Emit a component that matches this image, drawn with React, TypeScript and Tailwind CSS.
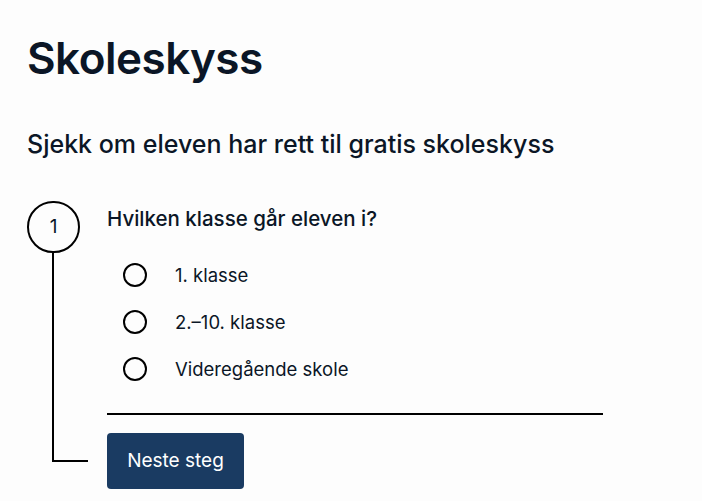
import React, { useState } from 'react';

const options = ['1. klasse', '2.–10. klasse', 'Videregående skole'];

const App: React.FC = () => {
  const [selected, setSelected] = useState<number | null>(null);

  return (
    <div className="min-h-screen bg-[#fdfdfd] pl-[27px] pt-[30px] font-['Inter',sans-serif] text-[#0b1626]">
      <h1 className="text-[44px] leading-[56px] font-semibold tracking-[-0.5px]">Skoleskyss</h1>
      <h2 className="mt-[42px] text-[25px] leading-[32px] font-medium">
        Sjekk om eleven har rett til gratis skoleskyss
      </h2>

      <div className="mt-[41px] flex gap-[27px]">
        <div className="flex w-[53px] flex-col">
          <div className="flex h-[52px] w-[53px] items-center justify-center rounded-full border-2 border-black text-[19px]">
            1
          </div>
          <div className="mb-[27px] ml-[25px] w-[36px] flex-1 border-b-2 border-l-2 border-black" />
        </div>

        <div className="w-[496px] pt-[4px]">
          <p className="text-[20.5px] leading-[28px] font-medium">Hvilken klasse går eleven i?</p>
          <ul className="mt-[30px] flex flex-col gap-[23px] pl-[16px]">
            {options.map((opt, i) => (
              <li key={opt}>
                <label className="flex cursor-pointer items-center gap-[28px]" onClick={() => setSelected(i)}>
                  <span className="flex h-[24px] w-[24px] items-center justify-center rounded-full border-2 border-black">
                    {selected === i && <span className="h-[12px] w-[12px] rounded-full bg-black" />}
                  </span>
                  <span className="text-[18.5px] leading-[24px]">{opt}</span>
                </label>
              </li>
            ))}
          </ul>
          <div className="mt-[32px] border-t-2 border-black" />
          <button className="mt-[18px] h-[56px] w-[137px] rounded-[4px] bg-[#1a3b62] text-[19px] text-white">
            Neste steg
          </button>
        </div>
      </div>
    </div>
  );
};

export default App;
